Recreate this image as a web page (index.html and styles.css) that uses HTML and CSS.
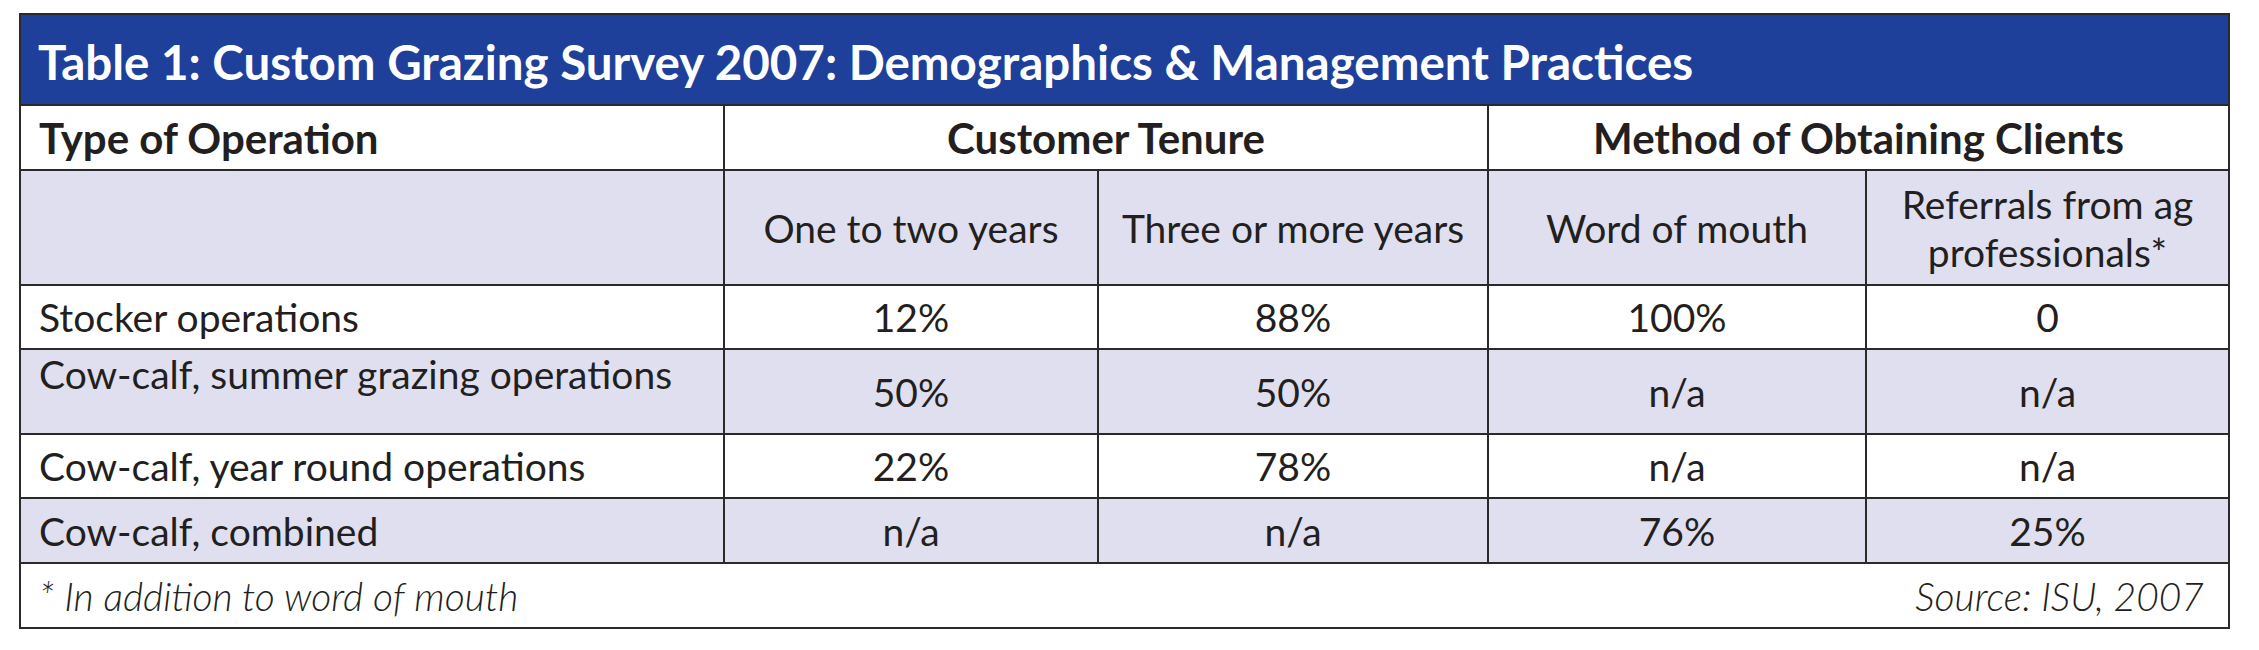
FILE: index.html
```html
<!DOCTYPE html>
<html lang="en">
<head>
<meta charset="utf-8">
<title>Table 1: Custom Grazing Survey 2007</title>
<link rel="stylesheet" href="styles.css">
</head>
<body>
<div class="survey">
  <div class="cell title">Table 1: Custom Grazing Survey 2007: Demographics &amp; Management Practices</div>

  <div class="cell head left">Type of Operation</div>
  <div class="cell head span2">Customer Tenure</div>
  <div class="cell head span2">Method of Obtaining Clients</div>

  <div class="cell sub shade"></div>
  <div class="cell sub shade">One to two years</div>
  <div class="cell sub shade">Three or more years</div>
  <div class="cell sub shade">Word of mouth</div>
  <div class="cell sub shade">Referrals from ag<br>professionals*</div>

  <div class="cell label">Stocker operations</div>
  <div class="cell num">12%</div>
  <div class="cell num">88%</div>
  <div class="cell num">100%</div>
  <div class="cell num">0</div>

  <div class="cell label shade top">Cow-calf, summer grazing operations</div>
  <div class="cell num shade">50%</div>
  <div class="cell num shade">50%</div>
  <div class="cell num shade">n/a</div>
  <div class="cell num shade">n/a</div>

  <div class="cell label">Cow-calf, year round operations</div>
  <div class="cell num">22%</div>
  <div class="cell num">78%</div>
  <div class="cell num">n/a</div>
  <div class="cell num">n/a</div>

  <div class="cell label shade">Cow-calf, combined</div>
  <div class="cell num shade">n/a</div>
  <div class="cell num shade">n/a</div>
  <div class="cell num shade">76%</div>
  <div class="cell num shade">25%</div>

  <div class="cell foot">
    <span class="note">* In addition to word of mouth</span>
    <span class="note">Source: ISU, 2007</span>
  </div>
</div>
</body>
</html>
```
FILE: styles.css
```css
html, body {
  margin: 0;
  padding: 0;
  background: #ffffff;
}

body {
  font-family: Lato, "Open Sans", "Liberation Sans", sans-serif;
  color: #231f20;
}

.survey {
  margin: 13px 0 0 19px;
  display: grid;
  grid-template-columns: 702px 372px 388px 376px 361px;
  grid-template-rows: 89px 63px 113px 62px 83px 62px 63px 63px;
  gap: 2px;
  padding: 2px;
  width: max-content;
  background: #2b2a2b;
}

.cell {
  background: #ffffff;
  display: flex;
  align-items: center;
  justify-content: center;
  font-size: 39px;
  line-height: 48px;
  text-align: center;
}

.shade {
  background: #dfdfef;
}

.title {
  grid-column: 1 / -1;
  background: #1f409a;
  color: #ffffff;
  font-weight: 700;
  font-size: 47.5px;
  letter-spacing: 0;
  justify-content: flex-start;
  padding: 4px 0 0 17px;
}

.head {
  font-weight: 700;
  font-size: 42px;
}

.head.left {
  justify-content: flex-start;
  padding-left: 18px;
}

.span2 {
  grid-column: span 2;
}

.label {
  justify-content: flex-start;
  padding-left: 18px;
}

.label.top {
  align-items: flex-start;
  padding-top: 0;
}

.foot {
  grid-column: 1 / -1;
  justify-content: space-between;
  padding: 0 24px 0 18px;
}

.note {
  font-style: italic;
  font-weight: 300;
}
```
